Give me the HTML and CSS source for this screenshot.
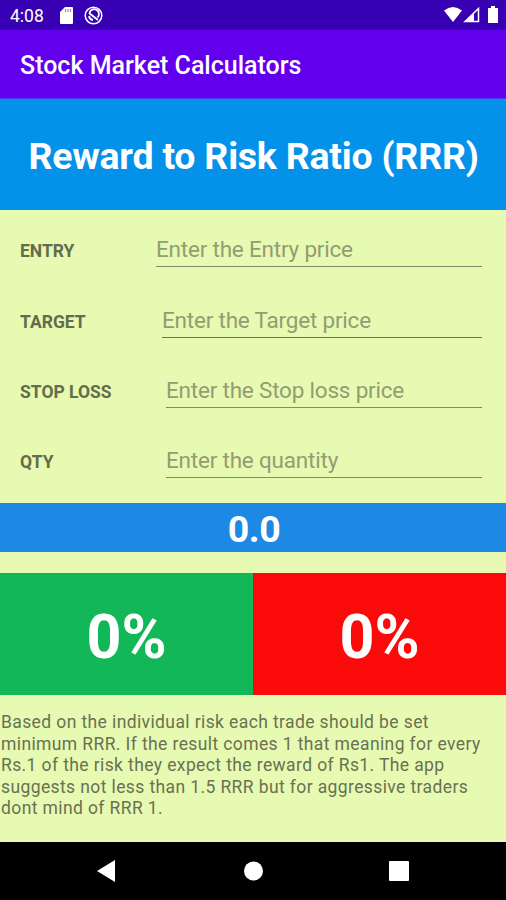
FILE: index.html
```html
<!DOCTYPE html>
<html lang="en"><head><meta charset="utf-8"><title>Stock Market Calculators</title><link rel="stylesheet" href="styles.css"></head>
<body><div class="screen">
<header class="status"><span class="time">4:08</span>
<svg class="sd" width="13" height="17" viewBox="0 0 13 17"><path fill="#fff" d="M5 0h7a1 1 0 0 1 1 1v15a1 1 0 0 1-1 1H1a1 1 0 0 1-1-1V5z"/><path stroke="#3700b3" stroke-opacity=".5" stroke-width="1.200" d="M5.500 2v3M8 2v3M10.500 2v3"/></svg>
<svg class="radar" width="19" height="19" viewBox="0 0 19 19" fill="none" stroke="#fff"><circle cx="9.500" cy="9.500" r="8.300" stroke-width="1.500"/><path stroke-width="1.800" d="M5.500 7A4.800 4.800 0 1 1 13.500 11.500M5 10Q5.500 13.500 9 14M5 7l9 7"/></svg>
<svg class="signals" width="54" height="18" viewBox="0 0 54 18"><path fill="#fff" d="M0 4.500Q9-2.500 18 4.500L9 16z"/><path fill="none" stroke="#fff" stroke-width="1.500" d="M21 15.500L34.500 2.500v13z"/><path fill="#fff" d="M21 16l9-9v9zM44 2h3V0h4v2h3v15H44z"/></svg></header>
<div class="appbar">Stock Market Calculators</div>
<h1 class="title">Reward to Risk Ratio (RRR)</h1>
<main>
<div class="form">
<label class="row"><span class="label">ENTRY</span><input class="field entry" placeholder="Enter the Entry price"></label>
<label class="row"><span class="label">TARGET</span><input class="field target" placeholder="Enter the Target price"></label>
<label class="row"><span class="label">STOP LOSS</span><input class="field" placeholder="Enter the Stop loss price"></label>
<label class="row"><span class="label">QTY</span><input class="field" placeholder="Enter the quantity"></label>
</div>
<div class="ratio">0.0</div>
<div class="percents"><div class="gain">0%</div><div class="loss">0%</div></div>
<p class="note">Based on the individual risk each trade should be set<br>minimum RRR. If the result comes 1 that meaning for every<br>Rs.1 of the risk they expect the reward of Rs1. The app<br>suggests not less than 1.5 RRR but for aggressive traders<br>dont mind of RRR 1.</p>
</main>
<nav class="nav"><svg width="20" height="22" viewBox="0 0 20 22"><path fill="#fff" d="M1 11L19 0v22z"/></svg><svg width="20" height="20" viewBox="0 0 20 20"><circle fill="#fff" cx="10.500" cy="10" r="9.500"/></svg><svg width="20" height="20" viewBox="0 0 20 20"><rect fill="#fff" width="20" height="20" rx="1"/></svg></nav>
</div></body></html>
```
FILE: styles.css
```css
* { box-sizing: border-box; }
body { margin: 0; font-family: Roboto, sans-serif; }
.screen { width: 506px; height: 900px; display: flex; flex-direction: column; background: #e7fab1; overflow: hidden; }
.status { height: 30px; background: #3700b3; display: flex; align-items: center; padding: 0 8px 0 10px; color: #fff; }
.time { font-size: 17.500px; width: 50px; padding-top: 1px; }
.radar { margin-left: 11px; }
.signals { margin-left: auto; }
.appbar { height: 69px; background: #6200ee; color: #fff; font-size: 25px; font-weight: 500; line-height: 72px; padding-left: 20px; border-bottom: 1px solid #4b38ea; }
.title { height: 111px; margin: 0; background: #0491e9; color: #fff; font-size: 37.500px; font-weight: 700; line-height: 115px; text-align: center; white-space: nowrap; letter-spacing: -0.240px; padding-left: 1px; }
main { flex: 1; }
.form { padding: 4.300px 24px 0 20px; height: 293px; }
.row { display: flex; align-items: center; height: 70.300px; }
.label { flex: 1; font-size: 17.500px; font-weight: 700; color: #646c4e; padding-top: 4px; }
.field { width: 316px; height: 36px; border: 0; border-bottom: 1px solid #828b65; background: none; padding: 1px 0 0; font: 22.500px Roboto, sans-serif; letter-spacing: -0.200px; outline: 0; }
.field::placeholder { color: #929d73; opacity: 1; }
.entry { width: 326px; }
.target { width: 320px; border-color: #6d7552; }
.ratio { height: 49px; background: #1e88e5; color: #fff; font-size: 37.500px; font-weight: 700; line-height: 53px; text-align: center; letter-spacing: -0.500px; padding-left: 2px; }
.percents { display: grid; grid-template-columns: 1fr 1fr; margin-top: 21px; height: 122px; color: #fff; text-align: center; font-weight: 700; font-size: 61px; line-height: 128px; }
.gain, .loss { height: 122px; }
.gain { background: #12b858; }
.loss { background: #fb0a0a; }
.note { margin: 17px 0 0 1px; font-size: 17.500px; line-height: 21.500px; letter-spacing: 0.390px; color: #697153; white-space: nowrap; }
.nav { height: 58px; background: #000; display: flex; justify-content: space-between; align-items: center; padding: 0 97px 0 96px; }
```
